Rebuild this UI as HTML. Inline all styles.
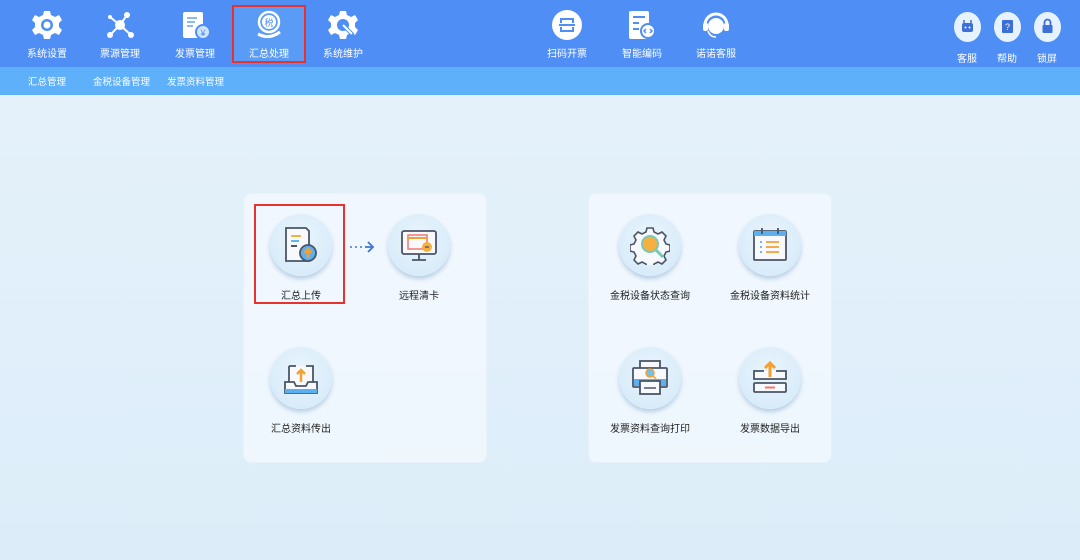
<!DOCTYPE html><html><head><meta charset="utf-8"><style>
*{margin:0;padding:0;box-sizing:border-box}
body{width:1080px;height:560px;overflow:hidden;font-family:"Liberation Sans","Noto Sans CJK SC",sans-serif;background:linear-gradient(180deg,#e6f2fb 0%,#dcedf9 100%);position:relative}
.top{position:absolute;left:0;top:0;width:1080px;height:67px;background:#4f8ef5}
.sub{position:absolute;left:0;top:67px;width:1080px;height:28px;background:#5db0f9;color:#fff;font-size:9.5px}
.sub span{position:absolute;top:7px}
.nav{position:absolute;top:0;width:74px;height:67px;color:#fff;font-size:10px;text-align:center}
.nav .lb{position:absolute;top:45px;left:0;width:100%}
.nav svg{position:absolute;left:21px;top:9px}
.sel{position:absolute;left:232px;top:5px;width:74px;height:58px;border:2px solid #e8322e;background:#5a9bf6}
.rc{position:absolute;top:12px;width:27px;height:30px;border-radius:50%;background:#e6f3ff}
.rl{position:absolute;top:50px;color:#fff;font-size:10px}
.panel{position:absolute;top:193px;width:244px;height:270px;background:rgba(242,248,254,.85);border-radius:8px;border:1px solid #e8f1fa}
.it{position:absolute;width:120px;text-align:center;font-size:10px;color:#222}
.it .c{width:62px;height:62px;margin:0 auto;border-radius:50%;background:radial-gradient(circle at 50% 40%,#e9f5fd,#d3e8f8);box-shadow:0 3px 4px rgba(120,160,200,.45);position:relative}
.it .c svg{position:absolute;left:11px;top:11px}
.it .t{margin-top:11px}
</style></head><body>
<div class="top"></div>
<div class="sel"></div>
<div class="nav" style="left:10px"><svg width="32" height="32" viewBox="0 0 32 32"><path d="M13 2h6l1 4 4 2 4-2 3 5-3 3v4l3 3-3 5-4-2-4 2-1 4h-6l-1-4-4-2-4 2-3-5 3-3v-4l-3-3 3-5 4 2 4-2z" fill="#fff"/><circle cx="16" cy="16" r="6" fill="#4f8ef5"/><circle cx="16" cy="16" r="3.5" fill="#fff"/></svg><div class="lb">系统设置</div></div>
<div class="nav" style="left:83px"><svg width="32" height="32" viewBox="0 0 32 32" fill="#fff"><circle cx="16" cy="16" r="5"/><circle cx="23" cy="6" r="3"/><circle cx="6" cy="8" r="2"/><circle cx="6" cy="26" r="3"/><circle cx="27" cy="26" r="3"/><path d="M16 16L23 6M16 16L6 8M16 16L6 26M16 16L27 26" stroke="#fff" stroke-width="2"/></svg><div class="lb">票源管理</div></div>
<div class="nav" style="left:158px"><svg width="32" height="32" viewBox="0 0 32 32"><rect x="4" y="3" width="20" height="26" rx="2" fill="#fff"/><path d="M8 9h10M8 13h8M8 17h6" stroke="#8ab8f8" stroke-width="2"/><circle cx="24" cy="23" r="7" fill="#cfe4ff" stroke="#4f8ef5" stroke-width="2"/><text x="24" y="27" font-size="9" text-anchor="middle" fill="#4f8ef5">¥</text></svg><div class="lb">发票管理</div></div>
<div class="nav" style="left:232px"><svg width="32" height="32" viewBox="0 0 32 32"><circle cx="16" cy="13" r="10" fill="none" stroke="#fff" stroke-width="2.5"/><circle cx="16" cy="13" r="7" fill="#fff"/><text x="16" y="17" font-size="9" text-anchor="middle" fill="#4f8ef5" font-family="Noto Sans CJK SC">税</text><path d="M5 25q11 6 22-2" stroke="#fff" stroke-width="3" fill="none"/></svg><div class="lb">汇总处理</div></div>
<div class="nav" style="left:306px"><svg width="32" height="32" viewBox="0 0 32 32"><path d="M13 2h6l1 4 4 2 4-2 3 5-3 3v4l3 3-3 5-4-2-4 2-1 4h-6l-1-4-4-2-4 2-3-5 3-3v-4l-3-3 3-5 4 2 4-2z" fill="#fff"/><circle cx="16" cy="16" r="6" fill="#4f8ef5"/><path d="M16 16l10 10" stroke="#4f8ef5" stroke-width="4"/><path d="M16 16l9 9" stroke="#fff" stroke-width="2"/></svg><div class="lb">系统维护</div></div>
<div class="nav" style="left:530px"><svg width="32" height="32" viewBox="0 0 32 32"><circle cx="16" cy="16" r="15" fill="#fff"/><path d="M10 14v-4h12v4M10 18v4h12v-4M8 16h16" stroke="#4f8ef5" stroke-width="2" fill="none"/></svg><div class="lb">扫码开票</div></div>
<div class="nav" style="left:605px"><svg width="32" height="32" viewBox="0 0 32 32"><rect x="3" y="2" width="20" height="28" rx="2" fill="#fff"/><path d="M7 8h12M7 14h6M7 20h6" stroke="#4f8ef5" stroke-width="2"/><circle cx="22" cy="22" r="7" fill="#fff" stroke="#4f8ef5" stroke-width="2"/><path d="M20 20l-2 2 2 2M24 20l2 2-2 2" stroke="#4f8ef5" stroke-width="1.5" fill="none"/></svg><div class="lb">智能编码</div></div>
<div class="nav" style="left:679px"><svg width="32" height="32" viewBox="0 0 32 32"><path d="M5 16a11 11 0 0 1 22 0" stroke="#fff" stroke-width="3" fill="none"/><circle cx="16" cy="17" r="8" fill="#fff"/><rect x="3" y="14" width="5" height="8" rx="2" fill="#fff"/><rect x="24" y="14" width="5" height="8" rx="2" fill="#fff"/><path d="M8 22q2 6 8 6" stroke="#fff" stroke-width="1.5" fill="none"/></svg><div class="lb">诺诺客服</div></div>
<div class="rc" style="left:954px"></div><div class="rc" style="left:994px"></div><div class="rc" style="left:1034px"></div>
<svg style="position:absolute;left:960px;top:19px" width="15" height="15" viewBox="0 0 15 15"><rect x="2" y="4" width="11" height="9" rx="2" fill="#3d6fd8"/><path d="M4 4V1M11 4V1" stroke="#3d6fd8" stroke-width="1.5"/><circle cx="5.5" cy="8.5" r="1" fill="#fff"/><circle cx="9.5" cy="8.5" r="1" fill="#fff"/></svg>
<svg style="position:absolute;left:1001px;top:19px" width="13" height="15"><rect x="1" y="1" width="11" height="13" rx="1" fill="#3d6fd8"/><text x="6.5" y="11" font-size="9" fill="#fff" text-anchor="middle">?</text></svg>
<svg style="position:absolute;left:1041px;top:18px" width="13" height="16"><path d="M3.5 7V4.5a3 3 0 0 1 6 0V7" stroke="#3d6fd8" stroke-width="1.8" fill="none"/><rect x="1.5" y="7" width="10" height="8" rx="1" fill="#3d6fd8"/></svg>
<div class="rl" style="left:957px">客服</div><div class="rl" style="left:997px">帮助</div><div class="rl" style="left:1037px">锁屏</div>
<div class="sub"><span style="left:28px">汇总管理</span><span style="left:93px">金税设备管理</span><span style="left:167px">发票资料管理</span></div>

<div class="panel" style="left:243px"></div>
<div class="panel" style="left:588px"></div>
<div style="position:absolute;left:254px;top:204px;width:91px;height:100px;border:2px solid #e8322e"></div>
<svg style="position:absolute;left:349px;top:240px" width="26" height="14"><path d="M1 7h14" stroke="#3f74d8" stroke-width="1.5" stroke-dasharray="2 3"/><path d="M16 7h8M19 2l5 5-5 5" stroke="#3f74d8" stroke-width="1.8" fill="none"/></svg>

<div class="it" style="left:241px;top:214px"><div class="c"><svg width="40" height="40" viewBox="0 0 40 40"><path d="M5 3h20l3 3v30H5z" fill="#f7f9fc" stroke="#4a5566" stroke-width="1.8"/><path d="M10 11h10" stroke="#f5b040" stroke-width="2"/><path d="M10 16h8" stroke="#5bb8f0" stroke-width="2"/><path d="M10 21h6" stroke="#4a5566" stroke-width="2"/><circle cx="27" cy="28" r="8" fill="#5bb0f0" stroke="#4a5566" stroke-width="1.8"/><path d="M27 33v-7M23.5 28l3.5-4 3.5 4" stroke="#f5a030" stroke-width="2.5" fill="none"/></svg></div><div class="t">汇总上传</div></div>
<div class="it" style="left:359px;top:214px"><div class="c"><svg width="40" height="40" viewBox="0 0 40 40"><rect x="3" y="6" width="34" height="23" rx="2" fill="#f7f9fc" stroke="#4a5566" stroke-width="1.8"/><path d="M20 29v6M13 35h14" stroke="#4a5566" stroke-width="1.8"/><rect x="9" y="10" width="19" height="14" fill="none" stroke="#f07870" stroke-width="1.5"/><path d="M9 13h19" stroke="#f5a030" stroke-width="2"/><circle cx="28" cy="22" r="5" fill="#f5b040"/><path d="M26 22h4" stroke="#4a5566" stroke-width="1.3"/></svg></div><div class="t">远程清卡</div></div>
<div class="it" style="left:241px;top:347px"><div class="c"><svg width="40" height="40" viewBox="0 0 40 40"><path d="M8 8h7M25 8h7v26H8V8" fill="#f7f9fc" stroke="#4a5566" stroke-width="1.8"/><path d="M4 24h9l2 4h10l2-4h9v11H4z" fill="#f7f9fc" stroke="#4a5566" stroke-width="1.8"/><path d="M4 31h32v4H4z" fill="#5bb0f0"/><path d="M20 24V12M16 16l4-4 4 4" stroke="#f5a030" stroke-width="2.5" fill="none"/></svg></div><div class="t">汇总资料传出</div></div>

<div class="it" style="left:590px;top:214px"><div class="c"><svg width="40" height="40" viewBox="0 0 40 40"><path d="M17 3h6l1 4 4 2 4-2 4 4-2 4 2 4 4 1v6l-4 1-2 4 2 4-4 4-4-2-4 2-1 4h-6l-1-4-4-2-4 2-4-4 2-4-2-4-4-1v-6l4-1 2-4-2-4 4-4 4 2 4-2z" fill="#f7f9fc" stroke="#4a5566" stroke-width="1.6"/><circle cx="20" cy="19" r="8" fill="#f5b040" stroke="#7cc8b8" stroke-width="2"/><path d="M26 25l7 7" stroke="#7cc8b8" stroke-width="3"/></svg></div><div class="t">金税设备状态查询</div></div>
<div class="it" style="left:710px;top:214px"><div class="c"><svg width="40" height="40" viewBox="0 0 40 40"><rect x="4" y="6" width="32" height="29" rx="1" fill="#f7f9fc" stroke="#4a5566" stroke-width="1.8"/><path d="M4 6h32v5H4z" fill="#5bb0f0"/><path d="M12 3v6M28 3v6" stroke="#4a5566" stroke-width="1.8"/><path d="M16 17h13M16 22h13M16 27h13" stroke="#f5a030" stroke-width="1.8"/><path d="M10 17h2M10 22h2M10 27h2" stroke="#5bb0f0" stroke-width="1.8"/></svg></div><div class="t">金税设备资料统计</div></div>
<div class="it" style="left:590px;top:347px"><div class="c"><svg width="40" height="40" viewBox="0 0 40 40"><rect x="10" y="3" width="20" height="8" fill="#f7f9fc" stroke="#4a5566" stroke-width="1.8"/><rect x="3" y="10" width="34" height="19" rx="1" fill="#f7f9fc" stroke="#4a5566" stroke-width="1.8"/><path d="M4 21h32v7H4z" fill="#5bb0f0"/><rect x="10" y="23" width="20" height="13" fill="#f7f9fc" stroke="#4a5566" stroke-width="1.8"/><path d="M14 30h12" stroke="#4a5566" stroke-width="1.5"/><circle cx="20" cy="15" r="4" fill="#6cc0f5" stroke="#f5a030" stroke-width="1.5"/><path d="M23 18l3 3" stroke="#f5a030" stroke-width="1.5"/></svg></div><div class="t">发票资料查询打印</div></div>
<div class="it" style="left:710px;top:347px"><div class="c"><svg width="40" height="40" viewBox="0 0 40 40"><path d="M14 13H4v8h32v-8H26" fill="#f7f9fc" stroke="#4a5566" stroke-width="1.8"/><rect x="4" y="25" width="32" height="9" rx="1" fill="#f7f9fc" stroke="#4a5566" stroke-width="1.8"/><path d="M15 29.5h10" stroke="#f07870" stroke-width="2"/><path d="M20 19V5M15 10l5-5 5 5" stroke="#f5a030" stroke-width="3" fill="none"/></svg></div><div class="t">发票数据导出</div></div>
</body></html>
